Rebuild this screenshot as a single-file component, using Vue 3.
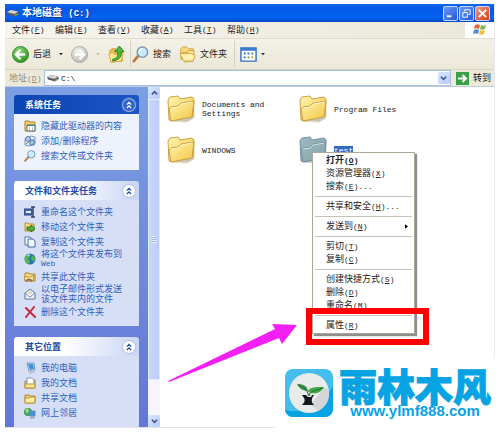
<template>
  <div class="desktop">
    <svg class="sprite" aria-hidden="true">
      <defs>
        <linearGradient id="gold" x1="0" y1="0" x2="1" y2="1">
          <stop offset="0" stop-color="#fff6b0" />
          <stop offset="1" stop-color="#f3c343" />
        </linearGradient>
        <linearGradient id="teal" x1="0" y1="0" x2="1" y2="1">
          <stop offset="0" stop-color="#9db9c4" />
          <stop offset="1" stop-color="#83a3a4" />
        </linearGradient>
        <radialGradient id="green" cx="0.4" cy="0.3" r="0.8">
          <stop offset="0" stop-color="#8fdc73" />
          <stop offset="1" stop-color="#238a1d" />
        </radialGradient>
        <radialGradient id="grey" cx="0.4" cy="0.3" r="0.8">
          <stop offset="0" stop-color="#f4f4f0" />
          <stop offset="1" stop-color="#b3b3ab" />
        </radialGradient>
      </defs>
      <symbol id="drive" viewBox="0 0 12 8">
        <path d="M0 3 4 1 11 2.500 12 5 8 7.500 1 5.500z" fill="#5c5d60" />
        <path d="M0 3 4 1 11 2.500 7.500 5z" fill="#d3d3d0" />
        <path d="M8 6.500 11 5" stroke="#7fc46f" />
      </symbol>
      <symbol id="program" viewBox="0 0 12 12">
        <path d="M1 4 7 1l4 1v7L5 11 1 10z" fill="#e9effa" stroke="#7a94c4" />
        <circle cx="4" cy="4" r="2.500" fill="#b8c7e4" stroke="#5d7bb5" />
        <path d="M6 5h4v5H6z" fill="#9cc7ef" stroke="#4a72b8" />
        <path d="M2 9 5 7" stroke="#64a04e" />
      </symbol>
      <symbol id="panel" viewBox="0 0 12 12">
        <path d="M1 3V1h4l1 1h5v9H1z" fill="#f2cf62" stroke="#a9862e" />
        <path d="M3 5h8v6H3z" fill="#fff" stroke="#5f6d70" />
        <path d="M3 5h8v1H3z" fill="#457aa0" />
        <path d="M5 8h1M8 8h1M5 10h1M8 10h1" stroke="#4b9655" />
      </symbol>
      <symbol id="search" viewBox="0 0 18 18">
        <path d="M2 16 7 10" stroke="#b57b47" stroke-width="3" stroke-linecap="round" />
        <circle cx="11" cy="6.500" r="5.500" fill="#c9ecfa" stroke="#7797b6" stroke-width="1.500" />
        <path d="M8 6c0-2 1-3 3-3" fill="none" stroke="#fff" stroke-width="1.500" />
      </symbol>
      <symbol id="rename" viewBox="0 0 12 12">
        <path d="M0 3h8v6H0z" fill="#456fb5" stroke="#29477f" />
        <path d="M2 6h5" stroke="#e5eeff" stroke-width="2" />
        <path d="M7 1h4M9 1v10M7 11h4" fill="none" stroke="#354563" stroke-width="1.500" />
      </symbol>
      <symbol id="move" viewBox="0 0 12 12">
        <path d="M1 2h3l1 1h5v7H1z" fill="#f7dd79" stroke="#b09038" />
        <path d="M3 8V6h4V4l4 3.500L7 11V9H3z" fill="#56b83c" stroke="#23731d" />
      </symbol>
      <symbol id="copy" viewBox="0 0 12 12">
        <path d="M1 1h5l2 2v6H1z" fill="#fff" stroke="#4b75ac" />
        <path d="M4 3h5l2 2v6H4z" fill="#f3f8ff" stroke="#3f689f" />
      </symbol>
      <symbol id="globe" viewBox="0 0 12 12">
        <circle cx="6" cy="6" r="5.500" fill="#2676b7" />
        <path d="M1 4c2-4 5-3 5-1L4 6l2 2-1 3C2 10 0 7 1 4M8 2l3 3-1 4-3-3z" fill="#54b948" />
        <path d="M3 3c1-1 2-1 3-1" stroke="#d6ffd1" fill="none" />
      </symbol>
      <symbol id="share" viewBox="0 0 12 12">
        <path d="M1 2h4l1 1h5v7H1z" fill="#f7da72" stroke="#a98734" />
        <path d="M0 6h7l3-2-1 6H1z" fill="#fff0a2" stroke="#b39340" />
        <path d="M2 10c2-2 4-2 6 0" stroke="#9a684e" stroke-width="2" fill="none" />
      </symbol>
      <symbol id="mail" viewBox="0 0 12 12">
        <path d="M1 5 6 1l5 4v6H1z" fill="#cfe0ef" stroke="#6b88a9" />
        <path d="M3 4h6v4H3z" fill="#fff" />
        <path d="m1 5 5 4 5-4v6H1z" fill="#e7edf4" stroke="#7892ae" />
        <path d="M4 5h4" stroke="#e3a953" />
      </symbol>
      <symbol id="remove" viewBox="0 0 12 12">
        <path d="m2 2 9 9M10 1 2 11" stroke="#c8283c" stroke-width="2" stroke-linecap="round" />
      </symbol>
      <symbol id="computer" viewBox="0 0 12 12">
        <path d="M3 1h7l1 7-6 1z" fill="#d6e5f4" stroke="#7a94b5" />
        <path d="m4 2 5 0 1 5-4 1z" fill="#3a93e0" />
        <path d="m4 9 5-1 2 2-5 2z" fill="#b8c2cf" />
      </symbol>
      <symbol id="documents" viewBox="0 0 12 12">
        <path d="M1 4h3l1-1h6v8H1z" fill="#f4ce5f" stroke="#a9862e" />
        <path d="M3 1h5l2 2v5H3z" fill="#fff" stroke="#7e97bb" />
        <path d="M1 7h10v4H1z" fill="#fae491" stroke="#b6953e" />
      </symbol>
      <symbol id="closed" viewBox="0 0 12 12">
        <path d="M1 3h4l1 1h5v7H1z" fill="#f4ce5f" stroke="#ad8a31" />
        <path d="M1 6h4l1-1h5v6H1z" fill="#ffee9d" stroke="#b6953e" />
      </symbol>
      <symbol id="network" viewBox="0 0 12 12">
        <circle cx="4" cy="5" r="4" fill="#3b9c5d" />
        <path d="M1 3 4 1l1 3-2 3z" fill="#9ce07d" />
        <path d="M5 4h6v5H6z" fill="#4096e4" stroke="#6f88a8" />
        <path d="m6 10 4-1 1 2-4 1z" fill="#9daab9" />
      </symbol>
      <symbol id="chevrons" viewBox="0 0 14 14">
        <path d="m4.500 6.500 2.500-2.500 2.500 2.500M4.500 10.500 7 8l2.500 2.500" fill="none" stroke="currentColor" stroke-width="1.400" />
      </symbol>
      <symbol id="folder" viewBox="0 0 28 28">
        <path d="m5 26 15 1 7-4V8z" fill="#77735e" opacity="0.4" />
        <path d="M1 5 3 2l8-1 2 3 12-2 2 2-1 17-21 5-3-1z" stroke-width="1" />
        <path d="m2 14 2-2 7-1 3-3 13-2-2 16-21 4z" stroke-width="1" />
        <path d="m4 13 7-1 3-3 11-2" fill="none" stroke="#fff" opacity="0.6" />
      </symbol>
    </svg>

    <main class="window">
      <header class="title-bar">
        <svg class="drive-icon"><use href="#drive" /></svg>
        <h1>本地磁盘 <span class="latin">(C:)</span></h1>
        <button class="caption-button" aria-label="Minimize">
          <svg viewBox="0 0 14 14"><path d="M3 10h5" stroke="#fff" stroke-width="2" /></svg>
        </button>
        <button class="caption-button" aria-label="Restore">
          <svg viewBox="0 0 14 14"><path d="M5 5V3h6v5H9M3 6h5v5H3z" fill="none" stroke="#fff" /></svg>
        </button>
        <button class="caption-button close" aria-label="Close">
          <svg viewBox="0 0 14 14"><path d="m3 3 8 8m0-8-8 8" stroke="#fff" stroke-width="2" /></svg>
        </button>
      </header>

      <nav class="menu-bar">
        <button v-for="menu in menus" :key="menu.key">
          {{ menu.name }}<span class="latin">(<u>{{ menu.key }}</u>)</span>
        </button>
        <span class="flag">
          <svg viewBox="0 0 14 14">
            <path d="M2 2c2-1 3-1 5 0L6 6C4 5 3 5 1 6z" fill="#e7643a" />
            <path d="M8 2c2 1 3 1 5 0l-1 4c-2 1-3 1-5 0z" fill="#7fb74a" />
            <path d="M1 7c2-1 3-1 5 0l-1 4c-2-1-3-1-5 0z" fill="#4a8bdc" />
            <path d="M7 7c2 1 3 1 5 0l-1 4c-2 1-3 1-5 0z" fill="#f2bd3c" />
          </svg>
        </span>
      </nav>

      <div class="toolbar">
        <button class="back">
          <svg class="round" viewBox="0 0 18 18">
            <circle cx="9" cy="9" r="8.500" fill="url(#green)" stroke="#39882f" />
            <path d="M9 4 4 9l5 5M4.500 9H14" fill="none" stroke="#fff" stroke-width="2.400" />
          </svg>
          后退
          <svg class="caret" viewBox="0 0 5 4"><path d="M0 0h5L2.500 3z" fill="#222" /></svg>
        </button>
        <button class="forward" aria-label="前进">
          <svg class="round" viewBox="0 0 18 18">
            <circle cx="9" cy="9" r="8.500" fill="url(#grey)" stroke="#aaa9a2" />
            <path d="m9 4 5 5-5 5M13.500 9H4" fill="none" stroke="#fff" stroke-width="2.400" />
          </svg>
          <svg class="caret" viewBox="0 0 5 4"><path d="M0 0h5L2.500 3z" fill="#b9b7aa" /></svg>
        </button>
        <button class="up" aria-label="向上">
          <svg class="tool-icon" viewBox="0 0 18 18">
            <path d="M2 5 4 3h4l1 2h6v11L3 17z" fill="#e9bd4d" stroke="#c69a36" />
            <path d="m1 8 4-1 2 2 9-2-2 9-11 1z" fill="#ffe88c" stroke="#d3ac44" />
            <path d="M5 14c5-1 6-4 5-8H7l5-6 5 6h-3c1 6-3 9-9 10z" fill="#4db43d" stroke="#2b8527" />
          </svg>
        </button>
        <button class="search">
          <svg class="tool-icon"><use href="#search" /></svg>
          搜索
        </button>
        <button class="folders">
          <svg class="tool-icon" viewBox="0 0 18 18">
            <path d="M2 3 4 1h4l2 2h5v11H2z" fill="#f7dc76" stroke="#cda33e" />
            <path d="M4 7h5l1-2h6l-1 11-9 1z" fill="#ffe893" stroke="#cca13c" />
            <path d="m1 8 12 0 4 2-2 6H5z" fill="#fff2b0" stroke="#d0a642" />
          </svg>
          文件夹
        </button>
        <button class="views" aria-label="查看">
          <svg class="tool-icon" viewBox="0 0 18 18">
            <path d="M1 2h16v14H1z" fill="#fff" stroke="#2f70c4" stroke-width="1.500" />
            <path d="M1 2h16v3H1z" fill="#3978d5" />
            <path d="M4 8h2M8 8h2M4 12h2" stroke="#3070c5" stroke-width="2" />
            <path d="M12 8h2M8 12h2" stroke="#52a154" stroke-width="2" />
            <path d="M12 12h2" stroke="#d89c3d" stroke-width="2" />
          </svg>
          <svg class="caret" viewBox="0 0 5 4"><path d="M0 0h5L2.500 3z" fill="#222" /></svg>
        </button>
      </div>

      <form class="address-bar" @submit.prevent>
        <label for="address">地址<span class="latin">(<u>D</u>)</span></label>
        <div class="address-field">
          <svg class="drive-icon"><use href="#drive" /></svg>
          <input id="address" v-model="address" class="latin" type="text" />
          <button type="button" class="scroll-button" aria-label="地址列表">
            <svg viewBox="0 0 8 8"><path d="m1 2 3 3 3-3" /></svg>
          </button>
        </div>
        <button type="submit" class="go">
          <svg viewBox="0 0 13 13">
            <path d="M0 0h13v13H0z" fill="#38a047" />
            <path d="M2 6.500h8M6.500 3 10 6.500 6.500 10" fill="none" stroke="#fff" stroke-width="2" />
          </svg>
          转到
        </button>
      </form>

      <div class="body">
        <aside class="side">
          <section v-for="group in groups" :key="group.title" :class="{ primary: group.primary }">
            <div class="side-header">
              <h2>{{ group.title }}</h2>
              <button :aria-label="group.title">
                <svg><use href="#chevrons" /></svg>
              </button>
            </div>
            <ul>
              <li v-for="task in group.tasks" :key="task.icon">
                <a href="#">
                  <svg><use :href="'#' + task.icon" /></svg>
                  <span>
                    {{ task.name }}
                    <span v-if="task.rest" class="rest" :class="{ latin: task.latin }">{{ task.rest }}</span>
                  </span>
                </a>
              </li>
            </ul>
          </section>
        </aside>

        <div class="scrollbar">
          <button class="scroll-button" aria-label="Scroll up">
            <svg viewBox="0 0 8 8"><path d="m1 5 3-3 3 3" /></svg>
          </button>
          <div class="thumb"><span></span></div>
          <div class="track"></div>
          <button class="scroll-button" aria-label="Scroll down">
            <svg viewBox="0 0 8 8"><path d="m1 2 3 3 3-3" /></svg>
          </button>
        </div>

        <div class="files">
          <div v-for="file in files" :key="file.name" class="file" :class="{ selected: file.selected }">
            <svg><use href="#folder" /></svg>
            <span class="latin">{{ file.name }}</span>
          </div>

          <div class="context-menu" role="menu">
            <template v-for="(item, i) in contextItems" :key="i">
              <hr v-if="item.divider" />
              <button v-else role="menuitem" :class="{ default: item.bold }">
                <span>{{ item.name }}<span class="latin">(<u>{{ item.key }}</u>){{ item.more ? "..." : "" }}</span></span>
                <svg v-if="item.sub" viewBox="0 0 4 6"><path d="M0 0v6l4-3z" /></svg>
              </button>
            </template>
          </div>
          <div class="highlight"></div>
          <svg class="pointer" viewBox="0 0 130 60">
            <path d="M129 3 104 2l3 5L0 59l1 1 110-44 3 6z" fill="#f41ff4" />
          </svg>
        </div>
      </div>
    </main>

    <footer class="brand">
      <svg viewBox="0 0 48 48">
        <rect width="48" height="48" rx="8" fill="#45bdec" />
        <path d="M0 41c18 5 39-7 48-24v23a8 8 0 0 1-8 8H8a8 8 0 0 1-8-7z" fill="#08a3e3" />
        <circle cx="24" cy="24" r="20" fill="#e9eaea" />
        <path d="M39 19 26 36l7 6c8-4 13-12 10-22z" fill="#d4d5d6" />
        <path d="M12 15c7 0 10 2 11 7-5 0-8-2-11-7z" fill="#389344" />
        <path d="M23 23c1-5 6-5 16-5-3 6-9 8-15 5z" fill="#43a847" />
        <path d="M13 16c4 2 7 3 9 6l2 5 1-3c4-3 8-3 13-5" fill="none" stroke="#216f30" />
        <path d="M17 26h4l2 2h3l1-2h2c-3 4-3 7 0 10H17c4-4 3-6 0-10z" fill="#161a20" />
      </svg>
      <div>
        <strong>雨林木风</strong>
        <a href="#">www.ylmf888.com</a>
      </div>
    </footer>
  </div>
</template>

<script setup>
import { ref } from "vue";

const address = ref("C:\\");

const menus = [
  { name: "文件", key: "F" },
  { name: "编辑", key: "E" },
  { name: "查看", key: "V" },
  { name: "收藏", key: "A" },
  { name: "工具", key: "T" },
  { name: "帮助", key: "H" },
];

const groups = [
  {
    title: "系统任务",
    primary: true,
    tasks: [
      { icon: "panel", name: "隐藏此驱动器的内容" },
      { icon: "program", name: "添加/删除程序" },
      { icon: "search", name: "搜索文件或文件夹" },
    ],
  },
  {
    title: "文件和文件夹任务",
    tasks: [
      { icon: "rename", name: "重命名这个文件夹" },
      { icon: "move", name: "移动这个文件夹" },
      { icon: "copy", name: "复制这个文件夹" },
      { icon: "globe", name: "将这个文件夹发布到", rest: "Web", latin: true },
      { icon: "share", name: "共享此文件夹" },
      { icon: "mail", name: "以电子邮件形式发送", rest: "该文件夹内的文件" },
      { icon: "remove", name: "删除这个文件夹" },
    ],
  },
  {
    title: "其它位置",
    tasks: [
      { icon: "computer", name: "我的电脑" },
      { icon: "documents", name: "我的文档" },
      { icon: "closed", name: "共享文档" },
      { icon: "network", name: "网上邻居" },
    ],
  },
];

const files = [
  { name: "Documents and Settings" },
  { name: "Program Files" },
  { name: "WINDOWS" },
  { name: "test", selected: true },
];

const contextItems = [
  { name: "打开", key: "O", bold: true },
  { name: "资源管理器", key: "X" },
  { name: "搜索", key: "E", more: true },
  { divider: true },
  { name: "共享和安全", key: "H", more: true },
  { divider: true },
  { name: "发送到", key: "N", sub: true },
  { divider: true },
  { name: "剪切", key: "T" },
  { name: "复制", key: "C" },
  { divider: true },
  { name: "创建快捷方式", key: "S" },
  { name: "删除", key: "D" },
  { name: "重命名", key: "M" },
  { divider: true },
  { name: "属性", key: "R" },
];
</script>

<style>
body {
  margin: 0;
  background: #fff;
}
</style>

<style scoped>
.desktop {
  position: relative;
  padding: 4px 9px 9px 5px;
  color: #222;
  font: 9px/12px "Noto Sans CJK SC", sans-serif;
}

.sprite {
  position: absolute;
  width: 0;
  height: 0;
}

.latin {
  font-family: "Liberation Mono", "Noto Sans CJK SC", monospace;
  font-size: 8px;
}

button {
  display: flex;
  align-items: center;
  padding: 0;
  border: 0;
  background: none;
  color: inherit;
  font: inherit;
}

svg {
  flex: none;
}

.window {
  border-right: 1px solid #e8e8ee;
  border-bottom: 1px solid #e4e4e8;
}

.title-bar {
  display: flex;
  align-items: center;
  gap: 1px;
  height: 18px;
  padding: 0 4px 0 2px;
  background: linear-gradient(#1266e6, #0358e6 30%, #0662f2 75%, #0447c4);
  color: #fff;
}

.title-bar h1 {
  flex: 1;
  margin: 0 0 0 2px;
  font-size: 10px;
  line-height: 18px;
  text-shadow: 1px 1px 0 #0a3290;
}

.title-bar .latin {
  margin-left: 4px;
  font-size: 9px;
}

.drive-icon {
  width: 12px;
  height: 8px;
}

.caption-button {
  width: 15px;
  height: 15px;
  border: 1px solid #c6d8fa;
  border-radius: 2px;
  background: linear-gradient(135deg, #6a99f4, #2458d8);
}

.caption-button.close {
  background: linear-gradient(135deg, #f09a7c, #d53c16);
}

.caption-button svg {
  width: 13px;
  height: 13px;
}

.menu-bar {
  display: flex;
  gap: 11px;
  box-sizing: border-box;
  height: 17px;
  padding-left: 7px;
  background: linear-gradient(90deg, #f5f4ed, #ebe8da);
  border-bottom: 1px solid #dfdccd;
}

.menu-bar button {
  width: 32px;
  white-space: nowrap;
}

.flag {
  display: flex;
  justify-content: center;
  align-items: center;
  width: 29px;
  margin-left: auto;
  background: #fff;
}

.flag svg {
  width: 14px;
  height: 14px;
}

.toolbar {
  display: flex;
  align-items: center;
  box-sizing: border-box;
  height: 31px;
  padding-left: 7px;
  background: linear-gradient(#f3f1e8, #ece8d8);
  border-bottom: 1px solid #d9d5c5;
}

.toolbar button {
  gap: 4px;
}

.round {
  width: 17px;
  height: 17px;
}

.tool-icon {
  width: 17px;
  height: 17px;
}

.caret {
  width: 4px;
  height: 3px;
  margin-left: 4px;
}

.forward {
  margin-left: 8px;
}

.up {
  margin-left: 8px;
}

.search {
  height: 26px;
  margin-left: 5px;
  padding-left: 1px;
  border-left: 1px solid #d5d1c2;
}

.folders {
  margin-left: 8px;
}

.views {
  height: 26px;
  margin-left: 7px;
  padding-left: 5px;
  border-left: 1px solid #d5d1c2;
}

.views .caret {
  margin-left: 0;
}

.address-bar {
  display: flex;
  align-items: center;
  box-sizing: border-box;
  height: 17px;
  background: #ece9d9;
  border-bottom: 1px solid #bccbe2;
}

.address-bar label {
  width: 35px;
  padding-left: 4px;
  box-sizing: border-box;
  color: #8d8b81;
  white-space: nowrap;
}

.address-field {
  display: flex;
  flex: 1;
  align-items: center;
  height: 14px;
  margin-left: 4px;
  padding-left: 2px;
  border: 1px solid #a8bfdc;
  background: #fff;
}

.address-field input {
  flex: 1;
  min-width: 0;
  padding: 0 2px;
  border: 0;
  outline: 0;
  background: none;
  color: #222;
}

.scroll-button {
  justify-content: center;
  width: 12px;
  height: 12px;
  border-radius: 2px;
  background: linear-gradient(135deg, #dbe6fe, #b5cafa);
}

.scroll-button svg {
  width: 7px;
  height: 7px;
  fill: none;
  stroke: #405a8c;
  stroke-width: 2;
}

.go {
  gap: 4px;
  margin: 0 3px 0 5px;
}

.go svg {
  width: 13px;
  height: 13px;
}

.body {
  display: flex;
}

.side {
  flex: none;
  width: 125px;
  padding: 8px 9px 0;
  background: linear-gradient(#7b9fe2, #6376d7);
}

.side section {
  margin-bottom: 11px;
}

.side section:last-child {
  margin-bottom: 0;
}

.side-header {
  display: flex;
  align-items: center;
  justify-content: space-between;
  height: 19px;
  padding: 0 4px 0 11px;
  border-radius: 3px 3px 0 0;
  background: linear-gradient(90deg, #fff 40%, #c9d5f6);
  color: #1e4ba8;
}

.side-header h2 {
  margin: 0;
  font-size: 9px;
  line-height: 19px;
}

.side-header button {
  width: 12px;
  height: 12px;
  border-radius: 6px;
  background: #fff;
  box-shadow: 0 0 1px 1px #b5c2e2;
}

.side-header svg {
  width: 12px;
  height: 12px;
}

.primary .side-header {
  background: linear-gradient(90deg, #0b45b1, #1b55c4);
  color: #fff;
}

.primary .side-header button {
  background: #3467cc;
}

.side ul {
  margin: 0;
  padding: 4px 10px 7px;
  background: #d7dff7;
  list-style: none;
}

.primary ul {
  background: #eef2fc;
}

.side a {
  display: flex;
  align-items: center;
  gap: 5px;
  min-height: 15px;
  color: #2c5fbd;
  line-height: 10px;
  text-decoration: none;
  white-space: nowrap;
}

.side a svg {
  width: 12px;
  height: 12px;
}

.rest {
  display: block;
}

.scrollbar {
  display: flex;
  flex: none;
  flex-direction: column;
  width: 12px;
  background: #f5f5fb;
}

.thumb {
  display: flex;
  flex: 8;
  align-items: center;
  justify-content: center;
  border: 1px solid #e2eafd;
  border-radius: 2px;
  background: linear-gradient(90deg, #c8d7fc, #bccdf8);
}

.thumb span {
  width: 5px;
  height: 7px;
  background: repeating-linear-gradient(#e6edff 0 1px, #a3b7e8 1px 2px);
}

.track {
  flex: 1;
}

.files {
  position: relative;
  display: grid;
  flex: 1;
  grid-template-columns: 132px 132px;
  grid-auto-rows: 28px;
  gap: 13px 0;
  align-content: start;
  padding: 8px 0 0 7px;
  background: #fff;
}

.file {
  display: flex;
  align-items: center;
  gap: 7px;
  line-height: 9px;
}

.file svg {
  width: 28px;
  height: 28px;
  fill: url(#gold);
  stroke: #c9a242;
}

.file span {
  max-width: 70px;
}

.file.selected svg {
  fill: url(#teal);
  stroke: #7693a0;
}

.file.selected span {
  background: #316ac5;
  color: #fff;
}

.context-menu {
  position: absolute;
  top: 65px;
  left: 152px;
  box-sizing: border-box;
  width: 103px;
  padding: 1px;
  border: 1px solid #aca899;
  background: #fff;
  box-shadow: 2px 2px 1px #8f8f8f;
}

.context-menu button {
  justify-content: space-between;
  width: 100%;
  height: 13px;
  padding: 0 5px 0 12px;
  white-space: nowrap;
}

.context-menu .default {
  font-weight: bold;
}

.context-menu svg {
  width: 3px;
  height: 5px;
}

.context-menu hr {
  height: 1px;
  margin: 3px 1px;
  border: 0;
  background: #c5c2b8;
}

.highlight {
  position: absolute;
  top: 221px;
  left: 146px;
  box-sizing: border-box;
  width: 123px;
  height: 37px;
  border: 6px solid #fe0000;
}

.pointer {
  position: absolute;
  top: 235px;
  left: 8px;
  width: 130px;
  height: 60px;
}

/* Site badge laid over the lower right corner of the window */
.brand {
  position: absolute;
  right: 0;
  bottom: 0;
  display: flex;
  gap: 6px;
  box-sizing: border-box;
  width: 228px;
  height: 80px;
  padding: 12px 0 0 9px;
  background: #fff;
}

.brand svg {
  width: 48px;
  height: 48px;
}

.brand div {
  display: flex;
  flex-direction: column;
  align-items: center;
}

.brand strong {
  color: #08a3e3;
  font-size: 38px;
  font-weight: 900;
  line-height: 32px;
  -webkit-text-stroke: 1px #08a3e3;
}

.brand a {
  color: #08a3e3;
  font: bold 15px/20px "Liberation Sans Narrow", "Liberation Sans", sans-serif;
  text-decoration: none;
}
</style>
